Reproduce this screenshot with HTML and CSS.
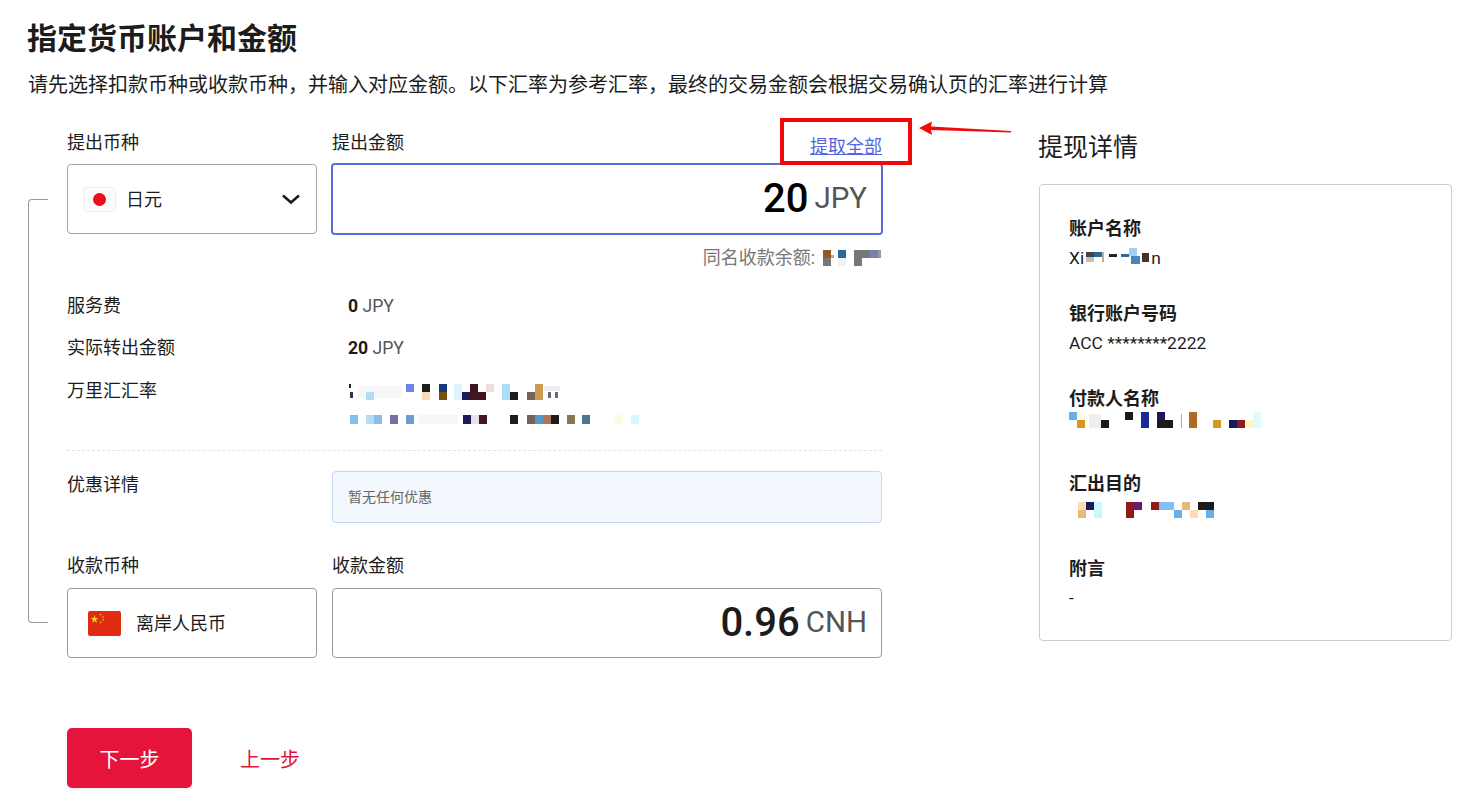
FILE: index.html
```html
<!DOCTYPE html>
<html lang="zh-CN">
<head>
<meta charset="utf-8">
<title>指定货币账户和金额</title>
<link rel="stylesheet" href="styles.css">
</head>
<body>
<main class="page">
  <h1 class="title">指定货币账户和金额</h1>
  <p class="subtitle">请先选择扣款币种或收款币种，并输入对应金额。以下汇率为参考汇率，最终的交易金额会根据交易确认页的汇率进行计算</p>
  <div class="content">
    <section class="form">
      <div class="bracket"></div>
      <div class="pair top">
        <div class="field">
          <label class="label">提出币种</label>
          <div class="box select">
            <span class="flag-jp"><span class="sun"></span></span>
            <span class="cur-name">日元</span>
            <svg class="chevron" width="20" height="12" viewBox="0 0 20 12"><path d="M2 2.5 L10 9.5 L18 2.5" fill="none" stroke="#1c1c1c" stroke-width="2.6"/></svg>
          </div>
        </div>
        <div class="field">
          <div class="label-row"><label class="label">提出金额</label><a class="all-link">提取全部</a></div>
          <div class="box amount active"><span class="num black">20</span><span class="code">JPY</span></div>
        </div>
      </div>
      <div class="balance">同名收款余额:
        <svg class="mosaic" width="62" height="20" viewBox="0 0 62 20"><rect x="3" y="2" width="8" height="8" fill="#8f5b22"/><rect x="3" y="10" width="8" height="8" fill="#777"/><rect x="11" y="7" width="3" height="3" fill="#aaa"/><rect x="18" y="2" width="8" height="8" fill="#24699f"/><rect x="18" y="10" width="8" height="8" fill="#f2f2f2"/><rect x="34" y="2" width="8" height="16" fill="#777"/><rect x="42" y="2" width="8" height="8" fill="#777"/><rect x="50" y="2" width="8" height="8" fill="#7a80a8"/><rect x="58" y="2" width="3" height="8" fill="#999"/></svg>
      </div>
      <div class="rows">
        <div class="row"><span class="row-key">服务费</span><span class="row-val"><b>0</b> JPY</span></div>
        <div class="row tall"><span class="row-key">实际转出金额</span><span class="row-val"><b>20</b> JPY</span></div>
        <div class="row rate"><span class="row-key">万里汇汇率</span>
          <span class="rate-val">
            <svg class="mosaic block" width="300" height="50" viewBox="0 0 300 50">
              <rect x="10" y="2" width="44" height="12" fill="#f6f6f6"/><rect x="1" y="0" width="2" height="4" fill="#222"/><rect x="2" y="8" width="3" height="6" fill="#334"/><rect x="18" y="8" width="8" height="8" fill="#b5dcf5"/><rect x="58" y="0" width="8" height="8" fill="#6d84e0"/><rect x="74" y="0" width="8" height="8" fill="#1c1c1c"/><rect x="74" y="8" width="8" height="8" fill="#f8dcb4"/><rect x="91" y="0" width="8" height="8" fill="#173980"/><rect x="91" y="8" width="8" height="8" fill="#7a4f14"/><rect x="106" y="0" width="8" height="16" fill="#def3fb"/><rect x="114" y="8" width="8" height="8" fill="#1c1a5c"/><rect x="122" y="0" width="8" height="16" fill="#43151c"/><rect x="130" y="8" width="8" height="8" fill="#43151c"/><rect x="138" y="0" width="8" height="8" fill="#ecdede"/><rect x="154" y="0" width="8" height="16" fill="#aedcf7"/><rect x="162" y="8" width="8" height="8" fill="#1c1c1c"/><rect x="179" y="8" width="8" height="8" fill="#75635a"/><rect x="187" y="0" width="8" height="16" fill="#d09a50"/><rect x="196" y="2" width="16" height="5" fill="#eee"/><rect x="200" y="8" width="3" height="6" fill="#667"/><rect x="207" y="8" width="3" height="6" fill="#667"/>
              <rect x="2" y="31" width="8" height="9" fill="#82c0ec"/><rect x="18" y="31" width="8" height="9" fill="#b5dcf5"/><rect x="26" y="31" width="8" height="9" fill="#8ebdec"/><rect x="42" y="31" width="8" height="9" fill="#7471a8"/><rect x="58" y="31" width="8" height="9" fill="#6d9ed0"/><rect x="70" y="31" width="40" height="9" fill="#f7f7f7"/><rect x="115" y="31" width="8" height="9" fill="#1c1a5c"/><rect x="123" y="31" width="8" height="9" fill="#e6e2e6"/><rect x="131" y="31" width="8" height="9" fill="#43151c"/><rect x="162" y="31" width="8" height="9" fill="#1c1c1c"/><rect x="179" y="31" width="8" height="9" fill="#75635a"/><rect x="187" y="31" width="8" height="9" fill="#5598d0"/><rect x="195" y="31" width="8" height="9" fill="#b0745a"/><rect x="203" y="31" width="8" height="9" fill="#1c1c1c"/><rect x="219" y="31" width="8" height="9" fill="#85774f"/><rect x="234" y="31" width="8" height="9" fill="#4d7790"/><rect x="267" y="31" width="8" height="9" fill="#fdfbe0"/><rect x="283" y="31" width="8" height="9" fill="#d4f9fd"/>
            </svg>
          </span>
        </div>
      </div>
      <hr class="divider">
      <div class="promo">
        <span class="row-key promo-key">优惠详情</span>
        <div class="promo-box">暂无任何优惠</div>
      </div>
      <div class="pair receive">
        <div class="field">
          <label class="label">收款币种</label>
          <div class="box static">
            <svg class="flag-cn" width="33" height="25" viewBox="0 0 33 25"><rect width="33" height="25" rx="2" fill="#e12b12"/><polygon points="6.5,4 7.5,7 10.5,7 8,8.8 9,11.8 6.5,10 4,11.8 5,8.8 2.5,7 5.5,7" fill="#fbd01b"/><circle cx="12.5" cy="3.5" r=".8" fill="#fbd01b"/><circle cx="15" cy="6" r=".8" fill="#fbd01b"/><circle cx="15" cy="9" r=".8" fill="#fbd01b"/><circle cx="12.5" cy="11.5" r=".8" fill="#fbd01b"/></svg>
            <span class="cur-name">离岸人民币</span>
          </div>
        </div>
        <div class="field">
          <label class="label">收款金额</label>
          <div class="box amount"><span class="num">0.96</span><span class="code">CNH</span></div>
        </div>
      </div>
      <div class="actions">
        <button class="btn-next">下一步</button>
        <a class="btn-prev">上一步</a>
      </div>
    </section>
    <aside class="side">
      <h2 class="side-title">提现详情</h2>
      <div class="card">
        <div class="item"><div class="item-key">账户名称</div><div class="item-val">Xi<svg class="mosaic" width="67" height="20" viewBox="0 0 67 20"><rect x="2" y="4" width="8" height="5" fill="#444"/><rect x="2" y="9" width="8" height="5" fill="#c8c0b0"/><rect x="10" y="4" width="8" height="5" fill="#24699f"/><rect x="18" y="4" width="2" height="10" fill="#c0ae90"/><rect x="25" y="6" width="8" height="3" fill="#222"/><rect x="37" y="6" width="8" height="3" fill="#3366a0"/><rect x="45" y="0" width="8" height="8" fill="#a5d0f5"/><rect x="47" y="8" width="9" height="8" fill="#4a83c0"/><rect x="58" y="5" width="7" height="9" fill="#43332c"/></svg>n</div></div>
        <div class="item"><div class="item-key">银行账户号码</div><div class="item-val">ACC ********2222</div></div>
        <div class="item"><div class="item-key">付款人名称</div><div class="item-val"><svg class="mosaic payer" width="194" height="22" viewBox="0 0 194 22"><rect x="0" y="1" width="8" height="8" fill="#6ab0e8"/><rect x="8" y="1" width="8" height="8" fill="#fdfbe0"/><rect x="8" y="9" width="8" height="8" fill="#d49a20"/><rect x="20" y="3" width="12" height="14" fill="#eee"/><rect x="32" y="9" width="8" height="8" fill="#1c1c1c"/><rect x="56" y="1" width="8" height="8" fill="#1c1c1c"/><rect x="72" y="1" width="8" height="16" fill="#1c2a98"/><rect x="88" y="1" width="8" height="8" fill="#1c1a5c"/><rect x="88" y="9" width="16" height="8" fill="#1c1c1c"/><rect x="112" y="3" width="1" height="14" fill="#c9a0a0"/><rect x="120" y="1" width="8" height="16" fill="#b06a20"/><rect x="144" y="9" width="8" height="8" fill="#d49a20"/><rect x="160" y="9" width="8" height="8" fill="#1c1a5c"/><rect x="168" y="9" width="8" height="8" fill="#901a1a"/><rect x="176" y="9" width="8" height="8" fill="#fdf6c0"/><rect x="184" y="1" width="8" height="16" fill="#e0fafd"/></svg></div></div>
        <div class="item"><div class="item-key">汇出目的</div><div class="item-val"><svg class="mosaic purpose" width="146" height="20" viewBox="0 0 146 20"><rect x="9" y="0" width="8" height="8" fill="#fcdcb0"/><rect x="9" y="8" width="8" height="8" fill="#e8b878"/><rect x="17" y="0" width="8" height="8" fill="#1c1a5c"/><rect x="25" y="0" width="8" height="16" fill="#c8fafd"/><rect x="57" y="0" width="8" height="16" fill="#901a1a"/><rect x="65" y="0" width="8" height="8" fill="#6c1a70"/><rect x="82" y="0" width="8" height="8" fill="#901a1a"/><rect x="90" y="0" width="15" height="8" fill="#80bff5"/><rect x="105" y="8" width="8" height="8" fill="#6ab0e8"/><rect x="113" y="0" width="8" height="8" fill="#e8b878"/><rect x="121" y="8" width="8" height="8" fill="#fcdcb0"/><rect x="129" y="0" width="16" height="8" fill="#1c1c1c"/><rect x="137" y="8" width="8" height="8" fill="#6ab0e8"/></svg></div></div>
        <div class="item"><div class="item-key">附言</div><div class="item-val">-</div></div>
      </div>
    </aside>
  </div>
  <div class="callout"></div>
  <svg class="arrow" width="94" height="20" viewBox="0 0 94 20"><path d="M0 7 L13 0.5 L12 5.5 L92 10 L92 11.5 L12 9 L13 14 Z" fill="#f00a0a"/></svg>
</main>
</body>
</html>
```

FILE: styles.css
```css
* { box-sizing: border-box; }
html, body { margin: 0; padding: 0; background: #fff; }
body {
  font-family: Roboto, "Noto Sans CJK SC", sans-serif;
  color: #1c1c1c;
  height: 807px;
  overflow: hidden;
}
.page { position: relative; padding: 19px 0 0 28px; width: 1478px; }
.title { margin: 0; font-size: 30px; line-height: 40px; font-weight: 700; margin-left: -1px; }
.subtitle { margin: 8px 0 0; font-size: 20px; line-height: 36px; }
.content { display: flex; margin-top: 27px; }
.form { position: relative; width: 815px; margin-left: 39px; flex: none; }
.bracket {
  position: absolute; left: -39px; top: 69px;
  width: 20px; height: 424px;
  border: 1px solid #999; border-right: 0; border-radius: 4px 0 0 4px;
}
.pair { display: grid; grid-template-columns: 250px 550px; column-gap: 15px; }
.field { display: flex; flex-direction: column; }
.label-row { display: flex; justify-content: space-between; align-items: flex-start; }
.label { font-size: 18px; line-height: 24px; height: 34px; display: block; }
.top .label { padding-top: 1px; }
.all-link {
  font-size: 18px; line-height: 22px; color: #5566e0;
  text-decoration: underline; margin-top: 6px;
}
.box {
  height: 70px; border: 1px solid #a5a5a5; border-radius: 4px;
  display: flex; align-items: center;
}
.select { padding: 0 15px; }
.static { padding: 0 20px; border-color: #999; }
.flag-jp {
  width: 33px; height: 25px; border: 1px solid #eee; border-radius: 4px;
  display: flex; align-items: center; justify-content: center; background: #fbfbfb;
}
.sun { width: 13px; height: 13px; border-radius: 50%; background: #ea0d1d; }
.cur-name { font-size: 18px; margin-left: 10px; padding-bottom: 2px; }
.static .cur-name { margin-left: 15px; }
.chevron { margin-left: auto; }
.amount { justify-content: flex-end; padding: 0 14px; gap: 6px; border-color: #999; }
.amount.active { border: 2px solid #5570dc; padding: 0 14px; margin: -1px; height: 72px; }
.num { font-size: 40px; font-weight: 500; color: #1c1c1c; line-height: 1; }
.num.black { color: #000; }
.code { font-size: 29.5px; font-weight: 400; color: #555; line-height: 1; }
.balance {
  display: flex; justify-content: flex-end; align-items: center;
  font-size: 18px; line-height: 24px; color: #777; margin-top: 12px; gap: 5px;
}
.mosaic { display: inline-block; vertical-align: middle; filter: blur(.35px); }
.mosaic.block { display: block; }
.payer { margin-top: -2px; }
.purpose { margin-top: 4px; }
.rows { margin-top: 24px; }
.row { display: flex; font-size: 18px; line-height: 24px; height: 42px; }
.row.tall { height: 43px; }
.row-key { width: 281px; flex: none; font-size: 18px; }
.row-val { font-size: 17.6px; color: #555; }
.row-val b { color: #1c1c1c; font-weight: 700; }
.rate { height: 54px; }
.rate-val { display: block; padding-top: 5px; }
.divider { border: 0; border-top: 1px dashed #e3e3e3; margin: 17px 0 0; }
.promo { display: flex; margin-top: 20px; }
.promo-key { width: 265px; line-height: 28px; }
.promo-box {
  width: 550px; height: 52px; background: #f3f7fe; border: 1px solid #c3d6f5;
  border-radius: 4px; display: flex; align-items: center; padding: 0 0 3px 15px;
  font-size: 14px; color: #666;
}
.receive { margin-top: 31px; }
.actions { display: flex; align-items: center; gap: 48px; margin-top: 70px; }
.btn-next {
  width: 125px; height: 60px; border: 0; border-radius: 5px; background: #e6143c;
  color: #fff; font: inherit; font-size: 20px; box-shadow: 0 2px 4px rgba(0,0,0,.06);
}
.btn-prev { font-size: 20px; color: #dc173c; }
.side { width: 413px; margin-left: 157px; flex: none; }
.side-title { margin: 0 0 0 -1px; font-size: 25px; font-weight: 400; line-height: 36px; }
.card {
  margin-top: 18px; height: 457px; border: 1px solid #ccc; border-radius: 4px;
  padding: 29px 29px 0;
}
.item { height: 85px; }
.item-key { font-size: 18px; font-weight: 700; line-height: 30px; }
.item-val { font-size: 17.4px; line-height: 30px; display: flex; align-items: center; margin-top: -1px; }
.callout {
  position: absolute; left: 780px; top: 118px; width: 132px; height: 47px;
  border: 4px solid #f00a0a;
}
.arrow { position: absolute; left: 919px; top: 121px; }
```
